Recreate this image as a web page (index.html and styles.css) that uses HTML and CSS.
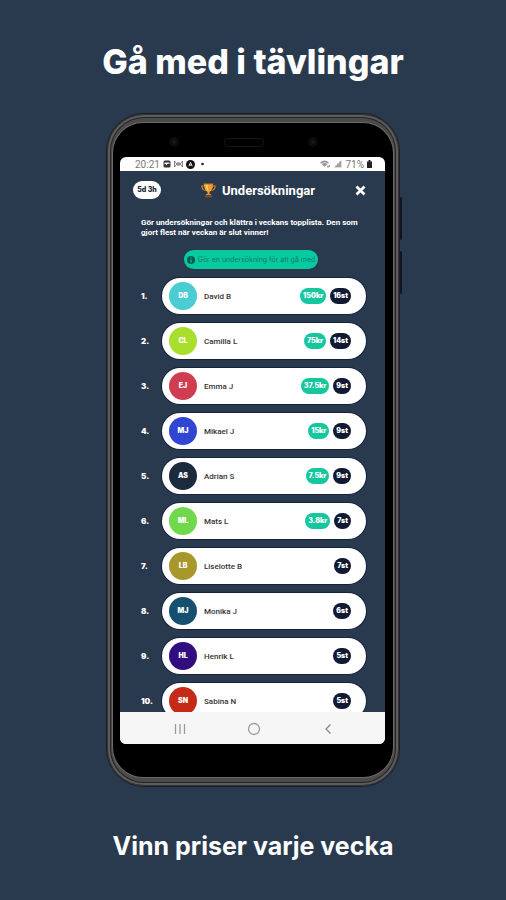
FILE: index.html
```html
<!DOCTYPE html>
<html lang="sv">
<head>
<meta charset="utf-8">
<meta name="viewport" content="width=device-width, initial-scale=1">
<title>Gå med i tävlingar</title>
<link rel="stylesheet" href="styles.css">
</head>
<body>
<main class="page">
  <h1 class="headline">Gå med i tävlingar</h1>
  <section class="phone">
    <span class="key key-volume"></span>
    <span class="key key-power"></span>
    <div class="bezel">
      <div class="sensors">
        <span class="lens"></span>
        <span class="speaker"></span>
        <span class="lens"></span>
      </div>
      <div class="screen">
        <div class="status">
          <span>20:21</span>
          <svg width="8" height="8" viewBox="0 0 8 8"><rect x=".5" y=".5" width="7" height="7" rx="1.5" fill="#333"/><path d="M1.500 2.500h5V4L5 3.500 3.500 5l-1-1-1 .5z" fill="#fff"/></svg>
          <svg width="9" height="8" viewBox="0 0 9 8"><path d="M.5 1v6L4 2.500v3L.5 1M8.500 1v6L5 2.500v3L8.500 1" fill="none" stroke="#666" stroke-width=".8"/></svg>
          <svg width="9" height="9" viewBox="0 0 8 8"><circle cx="4" cy="4" r="4" fill="#111"/><path d="M2.500 5.500 4 2l1.500 3.500M3 4.500h2" fill="none" stroke="#fff" stroke-width=".8"/></svg>
          <svg class="dot" width="3" height="8" viewBox="0 0 3 8"><circle cx="1.500" cy="4" r="1.300" fill="#222"/></svg>
          <span class="spacer"></span>
          <svg width="11" height="8" viewBox="0 0 11 8"><path d="M0 2.500Q4.500-1.500 9 2.500L4.500 7z" fill="#999"/><path d="M1 4Q4.500 1 8 4" stroke="#eee" stroke-width=".7" fill="none"/><path d="M7 5.500l1 2 1-2M9.500 7V5" stroke="#888" stroke-width=".8" fill="none"/></svg>
          <svg width="8" height="8" viewBox="0 0 8 8"><path d="M0 7.500 7.500 0v7.500z" fill="#bbb"/><path d="M2 7V5.500M4 7V3.500M6 7V1.500" stroke="#888"/></svg>
          <span>71%</span>
          <svg width="5" height="8" viewBox="0 0 5 8"><path d="M1.500 0h2v1.500H5V8H0V1.500h1.500z" fill="#222"/></svg>
        </div>
        <div class="app">
          <header class="bar">
            <span class="time-left">5d 3h</span>
            <h2 class="title">
              <svg width="15" height="15" viewBox="0 0 15 15"><path d="M3 3H1v1.500Q1.500 7 4.500 7.500M12 3h2v1.500Q13.500 7 10.500 7.500" fill="none" stroke="#d98324" stroke-width="1.200"/><path d="M3 1h9q0 6-3.500 8v2h-2V9Q3 7 3 1z" fill="#f0a030"/><path d="M4.500 1.500h2q0 4 .8 6.500-2.300-1.500-2.800-6.500z" fill="#ffd76a"/><path d="M2.500 1h10" stroke="#c87525"/><path d="M5 11h5v1H5z" fill="#d98324"/><path d="M4 12h7v2.500H4z" fill="#6d4a3c"/></svg>
              Undersökningar
            </h2>
            <button class="close" type="button" aria-label="Stäng"><svg width="11" height="11" viewBox="0 0 11 11"><path d="M1.500 1.500l8 8M9.500 1.500l-8 8" stroke="#fff" stroke-width="2.800"/></svg></button>
          </header>
          <p class="intro">Gör undersökningar och klättra i veckans topplista. Den som gjort flest när veckan är slut vinner!</p>
          <button class="notice" type="button"><svg width="8" height="8" viewBox="0 0 8 8"><circle cx="4" cy="4" r="4" fill="#075b55"/><path d="M4 1.500V2.500M4 3.500V6.500" stroke="#08ca9f" stroke-width="1.200"/></svg>Gör en undersökning för att gå med</button>
          <ol class="board">
            <li class="row"><span class="rank">1.</span><div class="card"><span class="avatar c1">DB</span><span class="name">David B</span><span class="pill prize">150kr</span><span class="pill">16st</span></div></li>
            <li class="row"><span class="rank">2.</span><div class="card"><span class="avatar c2">CL</span><span class="name">Camilla L</span><span class="pill prize">75kr</span><span class="pill">14st</span></div></li>
            <li class="row"><span class="rank">3.</span><div class="card"><span class="avatar c3">EJ</span><span class="name">Emma J</span><span class="pill prize">37.5kr</span><span class="pill">9st</span></div></li>
            <li class="row"><span class="rank">4.</span><div class="card"><span class="avatar c4">MJ</span><span class="name">Mikael J</span><span class="pill prize">15kr</span><span class="pill">9st</span></div></li>
            <li class="row"><span class="rank">5.</span><div class="card"><span class="avatar c5">AS</span><span class="name">Adrian S</span><span class="pill prize">7.5kr</span><span class="pill">9st</span></div></li>
            <li class="row"><span class="rank">6.</span><div class="card"><span class="avatar c6">ML</span><span class="name">Mats L</span><span class="pill prize">3.8kr</span><span class="pill">7st</span></div></li>
            <li class="row"><span class="rank">7.</span><div class="card"><span class="avatar c7">LB</span><span class="name">Liselotte B</span><span class="pill">7st</span></div></li>
            <li class="row"><span class="rank">8.</span><div class="card"><span class="avatar c8">MJ</span><span class="name">Monika J</span><span class="pill">6st</span></div></li>
            <li class="row"><span class="rank">9.</span><div class="card"><span class="avatar c9">HL</span><span class="name">Henrik L</span><span class="pill">5st</span></div></li>
            <li class="row"><span class="rank">10.</span><div class="card"><span class="avatar c10">SN</span><span class="name">Sabina N</span><span class="pill">5st</span></div></li>
          </ol>
        </div>
        <nav class="nav">
          <button type="button" aria-label="Senaste"><svg width="14" height="14" viewBox="0 0 14 14"><path d="M2.500 2v10M7 2v10M11.500 2v10" stroke="#999" stroke-width="1.300"/></svg></button>
          <button type="button" aria-label="Hem"><svg width="14" height="14" viewBox="0 0 14 14"><circle cx="7" cy="7" r="5.500" fill="none" stroke="#999" stroke-width="1.300"/></svg></button>
          <button type="button" aria-label="Tillbaka"><svg width="14" height="14" viewBox="0 0 14 14"><path d="M9.500 2.500 5 7 9.500 11.500" fill="none" stroke="#888" stroke-width="1.300"/></svg></button>
        </nav>
      </div>
    </div>
  </section>
  <p class="tagline">Vinn priser varje vecka</p>
</main>
</body>
</html>
```
FILE: styles.css
```css
* { box-sizing: border-box; }

body {
  margin: 0;
  background: #293a4e;
  color: #fff;
  font-family: Inter, "Liberation Sans", sans-serif;
}

h1, h2, p, ol { margin: 0; padding: 0; }

button {
  border: 0;
  padding: 0;
  background: none;
  font: inherit;
  display: flex;
  align-items: center;
}

svg { display: block; flex: none; }

.page {
  height: 100vh;
  min-height: 640px;
  display: flex;
  flex-direction: column;
  padding: 0 106px;
}

.headline, .tagline {
  margin: 0 -100px;
  text-align: center;
  white-space: nowrap;
}

.headline {
  padding: 40px 0 29px;
  font-size: 34px;
  font-weight: 800;
  line-height: 44px;
}

.tagline {
  padding: 42px 0 37px;
  font-size: 25px;
  font-weight: 700;
  line-height: 34px;
}

.phone {
  flex: 1;
  min-height: 0;
  position: relative;
  display: flex;
  padding: 9px 6px;
  border-radius: 38px;
  background: #4b4b4b;
  border: 1px solid #1c1f24;
  box-shadow: inset 0 0 0 1px #333, inset 0 0 0 3px #5c5c5c, inset 0 0 0 4px #242424;
}

.key {
  position: absolute;
  right: -3px;
  width: 2px;
  height: 43px;
  background: #10151c;
  border-radius: 0 2px 2px 0;
}

.key-volume { top: 83px; }
.key-power { top: 137px; }

.bezel {
  flex: 1;
  min-width: 0;
  display: flex;
  flex-direction: column;
  padding: 0 8px 33px 7px;
  border-radius: 30px;
  background: #000;
  box-shadow: 0 0 0 1px #6a6a6a;
}

.sensors {
  height: 34px;
  display: flex;
  align-items: center;
  justify-content: space-between;
  padding: 4px 67px 0 49px;
}

.lens {
  width: 10px;
  height: 10px;
  border-radius: 50%;
  background: #17181c;
  border: 3px solid #0c0c0e;
}

.speaker {
  width: 40px;
  height: 9px;
  border: 1px solid #181818;
  border-radius: 5px;
}

.screen {
  flex: 1;
  min-height: 0;
  display: flex;
  flex-direction: column;
  border-radius: 6px;
  overflow: hidden;
  background: #fff;
}

.status {
  flex: none;
  height: 14px;
  display: flex;
  align-items: center;
  gap: 3px;
  padding: 0 13px 0 15px;
  color: #777;
  font: 10px Roboto, sans-serif;
}

.dot { margin-left: 3px; }

.spacer { flex: 1; }

.app {
  flex: 1;
  min-height: 0;
  overflow: hidden;
  display: flex;
  flex-direction: column;
  padding: 0 19px 0 13px;
  background: #293a4e;
}

.bar {
  flex: none;
  height: 38px;
  display: flex;
  align-items: center;
  justify-content: space-between;
}

.time-left {
  width: 28px;
  border-radius: 9px;
  background: #fff;
  color: #111c30;
  text-align: center;
  font-size: 7px;
  font-weight: 800;
  line-height: 18px;
}

.title {
  display: flex;
  align-items: center;
  gap: 6px;
  font: 700 13px Roboto, sans-serif;
}

.intro {
  padding: 9px 0 0 8px;
  font: 700 8px/10px Roboto, sans-serif;
}

.notice {
  flex: none;
  align-self: center;
  gap: 3px;
  height: 19px;
  margin: 12px 0 9px 3px;
  padding: 0 3px;
  border-radius: 10px;
  background: #08ca9f;
  color: #087d70;
  font-size: 7px;
  white-space: nowrap;
}

.board {
  display: flex;
  flex-direction: column;
  gap: 9px;
  list-style: none;
}

.row {
  display: flex;
  align-items: center;
}

.rank {
  width: 29px;
  padding-left: 8px;
  font-size: 8px;
  font-weight: 900;
}

.card {
  flex: 1;
  height: 36px;
  display: flex;
  align-items: center;
  gap: 4px;
  padding: 0 15px 0 7px;
  border-radius: 18px;
  background: #fff;
  box-shadow: 0 0 0 1px #14213f;
}

.avatar {
  width: 28px;
  border-radius: 50%;
  text-align: center;
  font-size: 7px;
  font-weight: 900;
  line-height: 28px;
}

.name {
  flex: 1;
  padding-left: 3px;
  color: #333;
  font: 500 8px Roboto, sans-serif;
}

.pill {
  padding: 0 3px;
  border-radius: 8px;
  background: #111a33;
  font-size: 7px;
  font-weight: 900;
  line-height: 16px;
}

.prize { background: #15c79f; }

.c1 { background: #4accd2; }
.c2 { background: #a9df2c; }
.c3 { background: #d13d50; }
.c4 { background: #3045d2; }
.c5 { background: #1b2a3c; }
.c6 { background: #70d94b; }
.c7 { background: #a8972a; }
.c8 { background: #17506f; }
.c9 { background: #310d80; }
.c10 { background: #c52a18; }

.nav {
  flex: none;
  height: 32px;
  display: flex;
  align-items: center;
  justify-content: space-between;
  padding: 2px 50px 0 53px;
  background: #f6f6f6;
}
```
